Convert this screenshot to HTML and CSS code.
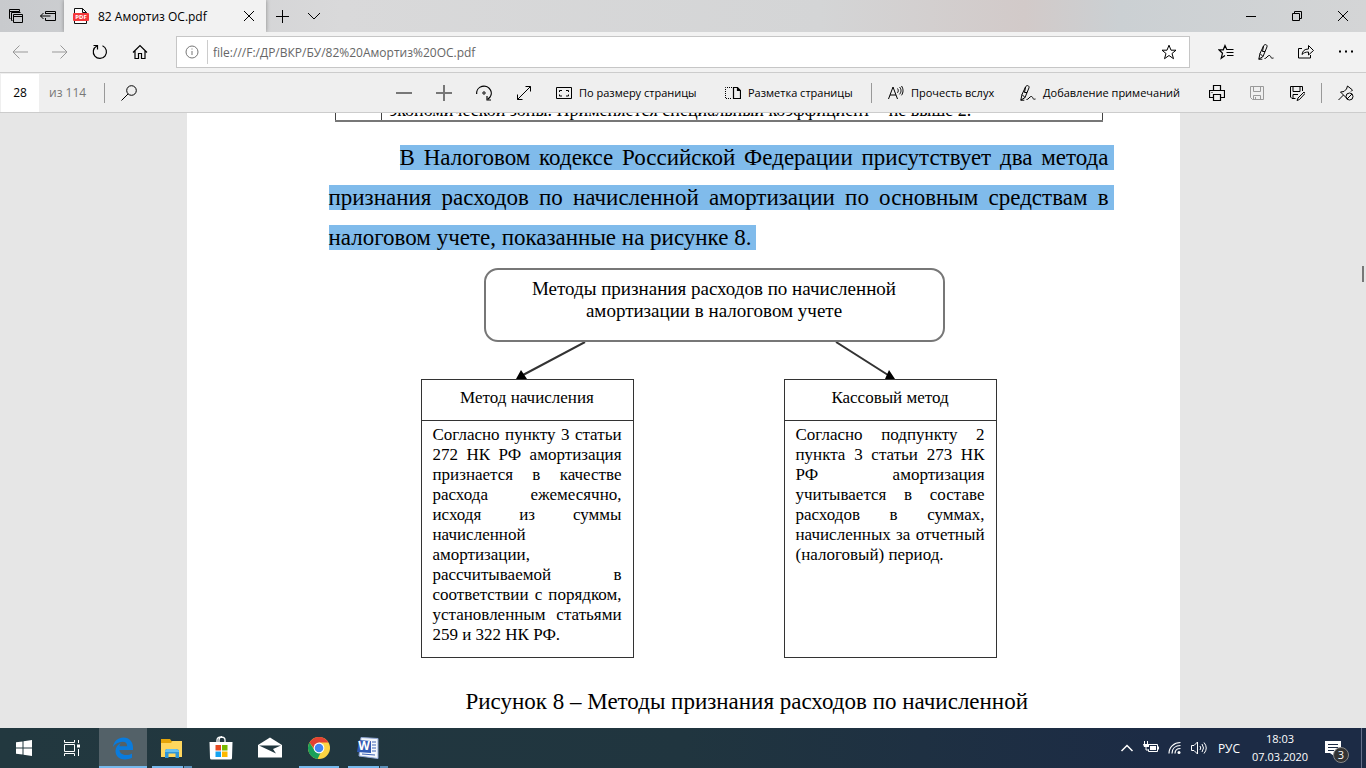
FILE: index.html
```html
<!DOCTYPE html>
<html lang="ru">
<head>
  <meta charset="utf-8">
  <title>82 Амортиз ОС.pdf</title>
  <link rel="stylesheet" href="styles.css">
</head>
<body>
  <div class="tabbar">
    <button class="tab-btn" aria-label="Отложенные вкладки">
      <svg class="icon" viewBox="0 0 16 16"><path d="M2.500 10.500h-1v-9h10v2M1.500 3.500h10M4.500 12.500h-1v-8h9M5.500 6.500h9v8h-9zM5.500 8.500h9"/></svg>
    </button>
    <button class="tab-btn" aria-label="Отложить вкладки">
      <svg class="icon" viewBox="0 0 16 16"><path d="M5.500 6V3.500h10v9h-10V10M5.500 5.500h10M0.500 8h10M3.500 5l-3 3 3 3"/></svg>
    </button>
    <div class="tab">
      <svg class="pdf-icon" viewBox="0 0 16 16"><path d="M1.500 .5h8l4 4v11h-12z" fill="#fff" stroke="#111"/><path d="M9.500.5v4h4" fill="none" stroke="#111"/><rect y="5" width="16" height="8" rx="1" fill="#f4383a"/><text x="8" y="11" text-anchor="middle">PDF</text></svg>
      <span class="tab-title">82 Амортиз ОС.pdf</span>
      <button class="tab-close" aria-label="Закрыть вкладку">
        <svg class="icon" viewBox="0 0 16 16"><path d="M3 3l10 10M13 3L3 13"/></svg>
      </button>
    </div>
    <button class="tab-btn" aria-label="Новая вкладка">
      <svg class="icon" viewBox="0 0 16 16"><path d="M8.500 2v13M2 8.500h13"/></svg>
    </button>
    <button class="tab-btn" aria-label="Просмотр вкладок">
      <svg class="icon" viewBox="0 0 16 16"><path d="M2 5l6 6 6-6"/></svg>
    </button>
    <div class="window-buttons">
      <button aria-label="Свернуть"><svg class="icon" viewBox="0 0 16 16"><path d="M3 8.500h10"/></svg></button>
      <button aria-label="Развернуть"><svg class="icon" viewBox="0 0 16 16"><path d="M3.500 5.500h7v7h-7zM5.500 5.500v-2h7v7h-2"/></svg></button>
      <button aria-label="Закрыть"><svg class="icon" viewBox="0 0 16 16"><path d="M3 3l10 10M13 3L3 13"/></svg></button>
    </div>
  </div>

  <div class="navbar">
    <button class="icon-btn disabled" aria-label="Назад">
      <svg class="icon" viewBox="0 0 16 16"><path d="M1 8h15M7.500 1.500L1 8l6.500 6.500"/></svg>
    </button>
    <button class="icon-btn disabled" aria-label="Вперед">
      <svg class="icon" viewBox="0 0 16 16"><path d="M0 8h15M8.500 1.500L15 8l-6.500 6.500"/></svg>
    </button>
    <button class="icon-btn" aria-label="Обновить">
      <svg class="icon" viewBox="0 0 16 16"><path stroke-width="1.200" d="M4.800 2A6.600 6.600 0 1 0 10.500 1.800M1.500 1.500h4v4"/></svg>
    </button>
    <button class="icon-btn" aria-label="Домашняя страница">
      <svg class="icon" viewBox="0 0 16 16"><path stroke-width="1.200" d="M1 8.500l7-7 7 7M3 7v7.500h3.500v-5h3v5H13V7"/></svg>
    </button>
    <div class="address">
      <svg class="icon info" viewBox="0 0 16 16"><circle cx="8" cy="8" r="6"/><path d="M8 7v4M8 4.500v1"/></svg>
      <input type="text" aria-label="Адрес" value="file:///F:/ДР/ВКР/БУ/82%20Амортиз%20ОС.pdf">
      <button class="icon-btn" aria-label="Добавить в избранное">
        <svg class="icon" viewBox="0 0 16 16"><path d="M8 1.200l2 5h5l-4 3.300 1.500 5.200L8 11.500l-4.500 3.200L5 9.500 1 6.200h5z"/></svg>
      </button>
    </div>
    <button class="icon-btn" aria-label="Избранное">
      <svg class="icon" viewBox="0 0 16 16"><path stroke-width="1.200" d="M11 5.500H8.800L7 1.500 5.300 5.800H1l3.500 3.400-1.300 5L7 11.500M9 5.500h6.500M8.500 8.500h7M9 11.500h6.500"/></svg>
    </button>
    <button class="icon-btn" aria-label="Добавить заметки">
      <svg class="icon" viewBox="0 0 16 16"><path d="M.8 15.200L2 9.500 5.500 2C6.500-.2 9.500.3 9 2.800L5 12.500zM2 9.500L5 12.500M5.500 2L4.500 7.500l2.500 0M.8 15.200h3.500M6.500 14.500c2 .5 3-3.500 5-3s.5 3.500 4 2.500"/></svg>
    </button>
    <button class="icon-btn" aria-label="Поделиться">
      <svg class="icon" viewBox="0 0 16 16"><path d="M4 4.500H.5v9.500H12.500v-3M4 10.500C4.500 7 6.500 5 10.500 5V1.500L15.500 6.500l-5 4.500V8C7.500 8 5.500 8.800 4 10.500z"/></svg>
    </button>
    <button class="icon-btn" aria-label="Параметры">
      <svg class="icon" viewBox="0 0 16 16"><path d="M1 7.500h2M7 7.500h2M13 7.500h2" stroke-width="2"/></svg>
    </button>
  </div>

  <div class="pdfbar">
    <input class="page-input" type="text" aria-label="Номер страницы" value="28">
    <span class="page-total">из 114</span>
    <span class="sep"></span>
    <button class="icon-btn" aria-label="Найти">
      <svg class="icon" viewBox="0 0 16 16"><circle cx="10.500" cy="5.500" r="4.800"/><path d="M7 9L.5 15.500"/></svg>
    </button>
    <div class="pdf-tools">
      <button class="icon-btn gray" aria-label="Уменьшить"><svg class="icon" viewBox="0 0 16 16"><path stroke-width="2" d="M0 8h16"/></svg></button>
      <button class="icon-btn gray" aria-label="Увеличить"><svg class="icon" viewBox="0 0 16 16"><path stroke-width="2" d="M0 8h16M8 0v16"/></svg></button>
      <button class="icon-btn" aria-label="Повернуть"><svg class="icon" viewBox="0 0 16 16"><path stroke-width="1.200" d="M.7 9A7.300 7 0 1 1 12 14M11 11v4h4"/><circle cx="8" cy="8" r="1.200"/></svg></button>
      <button class="icon-btn" aria-label="По ширине"><svg class="icon" viewBox="0 0 16 16"><path d="M1.500 14.500l13-13M9.500 1.500h5v5M1.500 9.500v5h5"/></svg></button>
      <button class="label-btn fit"><svg class="icon" viewBox="0 0 16 16"><path d="M.5 2.500h15v11H.5z"/><path d="M3.500 7V5.500H6M10 5.500h2.500V7M12.500 9.500v1.500H10M6 11H3.500V9.500"/></svg>По размеру страницы</button>
      <button class="label-btn layout"><svg class="icon" viewBox="0 0 16 16"><path stroke-dasharray="1 1" d="M7 2.500H.5v11H7"/><path stroke-width="1.200" d="M8.500 2.500h4l3 3v8h-7zM12.500 2.500v3h3"/></svg>Разметка страницы</button>
      <span class="sep"></span>
      <button class="label-btn read"><svg class="icon" viewBox="0 0 16 16"><path d="M.5 14L5 2l4.500 12M2 10h6M9.500 3.500c1 1.300 1 3 0 4.300M11.500 2c2 2.200 2 5 0 7.300M13.500 1c2 2.800 2 6.500 0 9.300"/></svg>Прочесть вслух</button>
      <button class="label-btn notes"><svg class="icon" viewBox="0 0 16 16"><path d="M.8 15.200L2 9.500 5.500 2C6.500-.2 9.500.3 9 2.800L5 12.500zM2 9.500L5 12.500M5.500 2L4.500 7.500l2.500 0M.8 15.200h3.500M6.500 14.500c2 .5 3-3.500 5-3s.5 3.500 4 2.500"/></svg>Добавление примечаний</button>
      <button class="icon-btn" aria-label="Печать"><svg class="icon" viewBox="0 0 16 16"><path stroke-width="1.200" d="M4.500 5.500v-5h7v5M4.500 12.500h-4v-7h15v7h-4M4.500 9.500h7v6h-7zM2.500 7.500h1"/></svg></button>
      <button class="icon-btn disabled" aria-label="Сохранить"><svg class="icon" viewBox="0 0 16 16"><path d="M1.500 1.500h13v13h-11l-2-2zM4.500 1.500v5h7v-5M4.500 14.500v-4h7v4M6.500 12v2"/></svg></button>
      <button class="icon-btn" aria-label="Сохранить как"><svg class="icon" viewBox="0 0 16 16"><path d="M6.500 13.500H3l-1.500-1.500V1.500h12V6M4 1.500v5h7v-5M4 13.500v-4h5M15 7l-6 6-1 2.500 2.500-1 5.500-6z"/></svg></button>
      <span class="sep"></span>
      <button class="icon-btn" aria-label="Открепить панель"><svg class="icon" viewBox="0 0 16 16"><path d="M.5 15l5-5M9.500 1l5 4-1.500 1.500M9.500 1l-1 3L6 6.500 2.500 7l6 6"/><circle cx="11.500" cy="11.500" r="3.500"/><path d="M9 14l5-5"/></svg></button>
    </div>
  </div>

  <main class="viewer">
    <div class="page">
      <table class="prev-table">
        <tr>
          <td></td>
          <td>экономической зоны. Применяется специальный коэффициент – не выше 2.</td>
        </tr>
      </table>
      <p class="paragraph"><mark>В Налоговом кодексе Российской Федерации присутствует два метода признания расходов по начисленной амортизации по основным средствам в налоговом учете, показанные на рисунке 8.</mark></p>
      <div class="figure">
        <div class="figure-title">Методы признания расходов по начисленной амортизации в налоговом учете</div>
        <svg class="arrows" viewBox="0 0 576 37"><path d="M164 0L102 33M415 0l52 33" stroke="#333" stroke-width="2"/><path d="M95 37l5-9 6 9zM474 37h-10l4-9z"/></svg>
        <div class="methods">
          <div class="method">
            <div class="method-name">Метод начисления</div>
            <p>Согласно пункту 3 статьи 272 НК РФ амортизация признается в качестве расхода ежемесячно, исходя из суммы начисленной<br>амортизации,<br>рассчитываемой в соответствии с порядком, установленным статьями 259 и 322 НК РФ.</p>
          </div>
          <div class="method">
            <div class="method-name">Кассовый метод</div>
            <p>Согласно подпункту 2 пункта 3 статьи 273 НК РФ амортизация учитывается в составе расходов в суммах, начисленных за отчетный (налоговый) период.</p>
          </div>
        </div>
      </div>
      <p class="caption">Рисунок 8 – Методы признания расходов по начисленной</p>
    </div>
    <div class="scroll-thumb"></div>
  </main>

  <div class="taskbar">
    <button class="task" aria-label="Пуск">
      <svg class="icon fill" viewBox="0 0 16 16"><path d="M0 2.300L6.500 1.400v6.100H0zM7.500 1.200L16 0v7.500H7.500zM0 8.500h6.500v6.100L0 13.700zM7.500 8.500H16V16l-8.500-1.200z"/></svg>
    </button>
    <button class="task" aria-label="Представление задач">
      <svg class="icon" viewBox="0 0 16 16"><path d="M.5 0v2.500h10V0M.5 4.500h10v7H.5zM.5 16v-2.500h10V16M14.500 0v3M14.500 9v7"/><path d="M13 6h3" stroke-width="3"/></svg>
    </button>
    <button class="task app active" aria-label="Microsoft Edge">
      <svg class="app-icon" viewBox="0 0 24 24"><path fill="#0a7bdc" d="M2 11C3 5 7 1.500 12.500 1.500 18.500 1.500 22 6 22 11.500V14H8.500c.2 3.600 3.500 5 6.700 5 2.300 0 4.100-.5 5.800-1.500v4.300c-2 1.200-4.500 1.700-7 1.700-5.500 0-9.500-3.200-9.500-8.500C4.500 11.500 6.500 8.500 10 7 9 8 8.600 9 8.500 10.200h7.700c0-3-1.700-4.400-4.500-4.400C7.500 5.800 4 8 2 11z"/></svg>
    </button>
    <button class="task app open many" aria-label="Проводник">
      <svg class="app-icon" viewBox="0 0 24 24"><path fill="#e5a50a" d="M1 3h9l1.500 2H22v16H1z"/><path fill="#ffd75e" d="M1 7h10l1.500-2H22v16H1z"/><path fill="#2f96d8" d="M5 14l2-1h9l3 1v8h-3.500v-4.500h-7V22H5z"/><path fill="#65c0f0" d="M5 14.500l2-1.500h9l3 1.500v1.500H5z"/></svg>
    </button>
    <button class="task app" aria-label="Microsoft Store">
      <svg class="app-icon" viewBox="0 0 24 24"><path fill="#fff" d="M.5 6h23l-.5 16q0 1.500-1.500 1.500h-19Q1 23.500 1 22z"/><path fill="none" stroke="#fff" stroke-width="1.300" d="M8 6V4q0-3 4-3t4 3v2M10 6V4q0-3 3-3.500"/><path fill="#e64a22" d="M6.500 9H12v5.500H6.500z"/><path fill="#79b900" d="M13 9h5.500v5.500H13z"/><path fill="#16a3ef" d="M6.500 15.500H12V21H6.500z"/><path fill="#fdb900" d="M13 15.500h5.500V21H13z"/></svg>
    </button>
    <button class="task app" aria-label="Почта">
      <svg class="app-icon" viewBox="0 0 24 24"><path fill="#fff" d="M0 9l12-7.500L24 9v12.500H0z"/><path fill="#21373f" d="M1 9.500h22L15 13l3 4.500z"/></svg>
    </button>
    <button class="task app open" aria-label="Google Chrome">
      <svg class="app-icon" viewBox="0 0 24 24"><circle cx="12" cy="12" r="11" fill="#fdd443"/><path fill="#e34133" d="M2.500 6.500a11 11 0 0 1 19 0H12l-3.500 8z"/><path fill="#1aa05a" d="M2.500 6.500L8 15l6 1-3.500 7A11 11 0 0 1 2.500 6.500z"/><circle cx="12" cy="12" r="5.400" fill="#fff"/><circle cx="12" cy="12" r="4.300" fill="#4285f4"/></svg>
    </button>
    <button class="task app open many" aria-label="Microsoft Word">
      <svg class="app-icon" viewBox="0 0 24 24"><path fill="#f4f7fc" stroke="#8fa6d4" d="M5 1.500l17 1v20L3 20z"/><path d="M16 6h4M16 9h4M16 12h4M16 15h4M6 18l13 1" stroke="#3d62b5"/><path fill="#2f59b3" d="M3 4l12 1v12L1 16z"/><text class="word-letter" x="8" y="14" text-anchor="middle">W</text></svg>
    </button>
    <div class="tray">
      <button class="tray-btn" aria-label="Скрытые значки"><svg class="icon" viewBox="0 0 16 16"><path stroke-width="1.500" d="M2.500 11L8 5.500l5.500 5.500"/></svg></button>
      <button class="tray-btn" aria-label="Батарея"><svg class="icon" viewBox="0 0 16 16"><path d="M5 4.500h9.500v7h-9v-2M15.500 6.500v3M1.500 1v3M4.500 1v3M3 7v3h3"/><path d="M0 4h6v3H1z" fill="#fff" stroke="none"/><path d="M7 6h6v4H7z" fill="#fff" stroke="none"/></svg></button>
      <button class="tray-btn" aria-label="Сеть"><svg class="icon" viewBox="0 0 16 16"><path d="M2 13.500C2 7 7 2.500 13.500 2.500M5 13.500c0-5 3.500-8 8.500-8M8 13.500c0-3 2.200-5 5.500-5" stroke-width="1.200"/><circle cx="12" cy="12.500" r="1.500" fill="#fff" stroke="none"/></svg></button>
      <button class="tray-btn" aria-label="Громкость"><svg class="icon" viewBox="0 0 16 16"><path d="M.5 5.500H3l3.500-3.500v12L3 10.500H.5zM9 6q1.500 2 0 4M11 4q3 4 0 8M13 2.500q4.500 5.500 0 11"/></svg></button>
      <button class="lang">РУС</button>
      <button class="clock">18:03<br>07.03.2020</button>
      <button class="notify" aria-label="Уведомления">
        <svg class="icon" viewBox="0 0 16 16"><path d="M0 1h16v12H9v3l-4-3H0z" fill="#fff" stroke="none"/><path d="M3 4.500h10M3 7.500h10M3 10.500h6" stroke="#1c2b45"/></svg>
        <span class="badge">3</span>
      </button>
    </div>
  </div>
</body>
</html>
```

FILE: styles.css
```css
* {
  box-sizing: border-box;
}

body {
  margin: 0;
  height: 100vh;
  display: flex;
  flex-direction: column;
  overflow: hidden;
  font-family: "Open Sans", "Segoe UI", sans-serif;
  font-size: 12px;
  color: #000;
}

button {
  display: flex;
  align-items: center;
  justify-content: center;
  flex: none;
  padding: 0;
  border: none;
  background: none;
  font: inherit;
  color: inherit;
}

input {
  border: none;
  outline: none;
  font: inherit;
}

.icon {
  width: 16px;
  height: 16px;
  flex: none;
  fill: none;
  stroke: currentColor;
}

/* tabs */
.tabbar {
  display: flex;
  flex: none;
  height: 32px;
  background: linear-gradient(90deg, #c8cacd, #d9d9da 25%, #d4d5d6 60%, #d2cac9 75%, #cbd0d3 82%, #d4d5d6);
}

.tab-btn {
  width: 32px;
}

.tab {
  display: flex;
  align-items: center;
  width: 202px;
  padding-left: 9px;
  background: #f2f2f2;
  box-shadow: 0 0 4px #888;
}

.pdf-icon {
  width: 16px;
  height: 16px;
  margin-right: 9px;
}

.pdf-icon text {
  font-size: 6px;
  font-weight: bold;
  fill: #fff;
}

.tab-title {
  flex: 1;
  white-space: nowrap;
}

.tab-close {
  width: 34px;
}

.window-buttons {
  display: flex;
  margin-left: auto;
}

.window-buttons button {
  width: 46px;
}

/* address bar */
.navbar {
  position: relative;
  display: flex;
  flex: none;
  align-items: center;
  height: 41px;
  background: #f2f2f2;
  border-bottom: 1px solid #ccc;
}

.icon-btn {
  width: 40px;
  height: 32px;
}

.disabled {
  color: #999;
}

.gray {
  color: #777;
}

.address {
  display: flex;
  align-items: center;
  flex: 1;
  height: 32px;
  margin: 0 16px;
  background: #fff;
  border: 1px solid #c6c6c6;
}

.address .info {
  margin: 0 7px;
  color: #777;
}

.address input {
  flex: 1;
  height: 24px;
  padding: 0 5px;
  border-left: 1px solid #ccc;
  color: #666;
}

/* pdf toolbar */
.pdfbar {
  display: flex;
  flex: none;
  align-items: center;
  height: 40px;
  padding-left: 1px;
  background: #efefef;
  border-bottom: 1px solid #ccc;
}

.page-input {
  width: 38px;
  height: 38px;
  padding: 0;
  background: #fff;
  text-align: center;
}

.page-total {
  width: 61px;
  padding-left: 10px;
  color: #777;
}

.sep {
  width: 1px;
  height: 20px;
  margin: 0 4px;
  background: #999;
}

.pdf-tools {
  display: flex;
  align-items: center;
  margin-left: auto;
}

.label-btn {
  justify-content: flex-start;
  gap: 7px;
  padding-left: 12px;
  font-size: 11px;
  white-space: nowrap;
}

.fit {
  width: 169px;
}

.layout {
  width: 154px;
}

.read {
  width: 132px;
}

.notes {
  width: 189px;
}

/* document */
.viewer {
  position: relative;
  flex: 1;
  min-height: 0;
  overflow: hidden;
  background: #e6e6e6;
  font-family: "Liberation Serif", "Times New Roman", serif;
}

.page {
  display: flow-root;
  max-width: 993px;
  height: 100%;
  margin: 0 auto;
  padding: 0 66px 0 142px;
  background: #fff;
}

.prev-table {
  width: 768px;
  height: 24px;
  margin: -16px 0 0 6px;
  border-collapse: collapse;
  font-size: 18px;
  line-height: 20px;
}

.prev-table td {
  padding: 2px 8px 0;
  border: 1px solid #444;
  border-bottom: 2px solid #777;
}

.prev-table td:first-child {
  width: 46px;
}

.paragraph {
  margin: 16px 0 0;
  font-size: 23px;
  line-height: 40px;
  text-align: justify;
  text-indent: 71px;
}

.paragraph mark {
  padding-right: 5px;
  background: #80bbeb;
  color: #000;
  -webkit-box-decoration-break: clone;
  box-decoration-break: clone;
}

.figure {
  width: 576px;
  margin: 10px 0 0 92px;
}

.figure-title {
  width: 461px;
  height: 74px;
  margin-left: 63px;
  padding: 8px 40px;
  border: 2px solid #777;
  border-radius: 14px;
  font-size: 19px;
  line-height: 22px;
  text-align: center;
}

.arrows {
  display: block;
  width: 100%;
}

.methods {
  display: flex;
  justify-content: space-between;
}

.method {
  width: 213px;
  height: 279px;
  border: 1px solid #333;
}

.method-name {
  height: 41px;
  border-bottom: 1px solid #333;
  font-size: 17px;
  line-height: 35px;
  text-align: center;
}

.method p {
  margin: 4px 11px 0;
  font-size: 17px;
  line-height: 20px;
  text-align: justify;
}

.caption {
  margin: 24px 0 0;
  padding-left: 137px;
  font-size: 23px;
  line-height: 40px;
  white-space: nowrap;
}

.scroll-thumb {
  position: absolute;
  top: 153px;
  right: 2px;
  width: 2px;
  height: 16px;
  background: #777;
}

/* taskbar */
.taskbar {
  display: flex;
  flex: none;
  height: 40px;
  background: linear-gradient(90deg, #22383f, #20353f 50%, #1c2b45 85%);
  color: #fff;
}

.task {
  position: relative;
  width: 48px;
}

.task .fill {
  fill: #fff;
  stroke: none;
}

.app {
  margin-right: 1px;
}

.active {
  margin-left: 3px;
  background: #536168;
}

.app-icon {
  width: 24px;
  height: 24px;
}

.active::after,
.open::after {
  content: "";
  position: absolute;
  bottom: 0;
  left: 4px;
  right: 4px;
  height: 2px;
  background: #76b9ed;
}

.active::after {
  left: 0;
  right: 0;
}

.many::after {
  background: linear-gradient(90deg, #76b9ed 31px, #22383f 31px, #22383f 32px, #5a8fb8 32px);
}

.word-letter {
  font-size: 12px;
  font-weight: bold;
  fill: #fff;
}

.tray {
  display: flex;
  margin-left: auto;
  padding-right: 4px;
}

.tray-btn {
  width: 24px;
}

.lang {
  width: 36px;
}

.clock {
  width: 66px;
  font-size: 11px;
  line-height: 18px;
}

.notify {
  position: relative;
  width: 49px;
  padding-right: 8px;
  border-right: 1px solid #66708a;
}

.badge {
  position: absolute;
  right: 12px;
  bottom: 5px;
  width: 16px;
  height: 16px;
  border: 1px solid #888;
  border-radius: 50%;
  background: #333;
  font-size: 11px;
  line-height: 14px;
  text-align: center;
}
```
